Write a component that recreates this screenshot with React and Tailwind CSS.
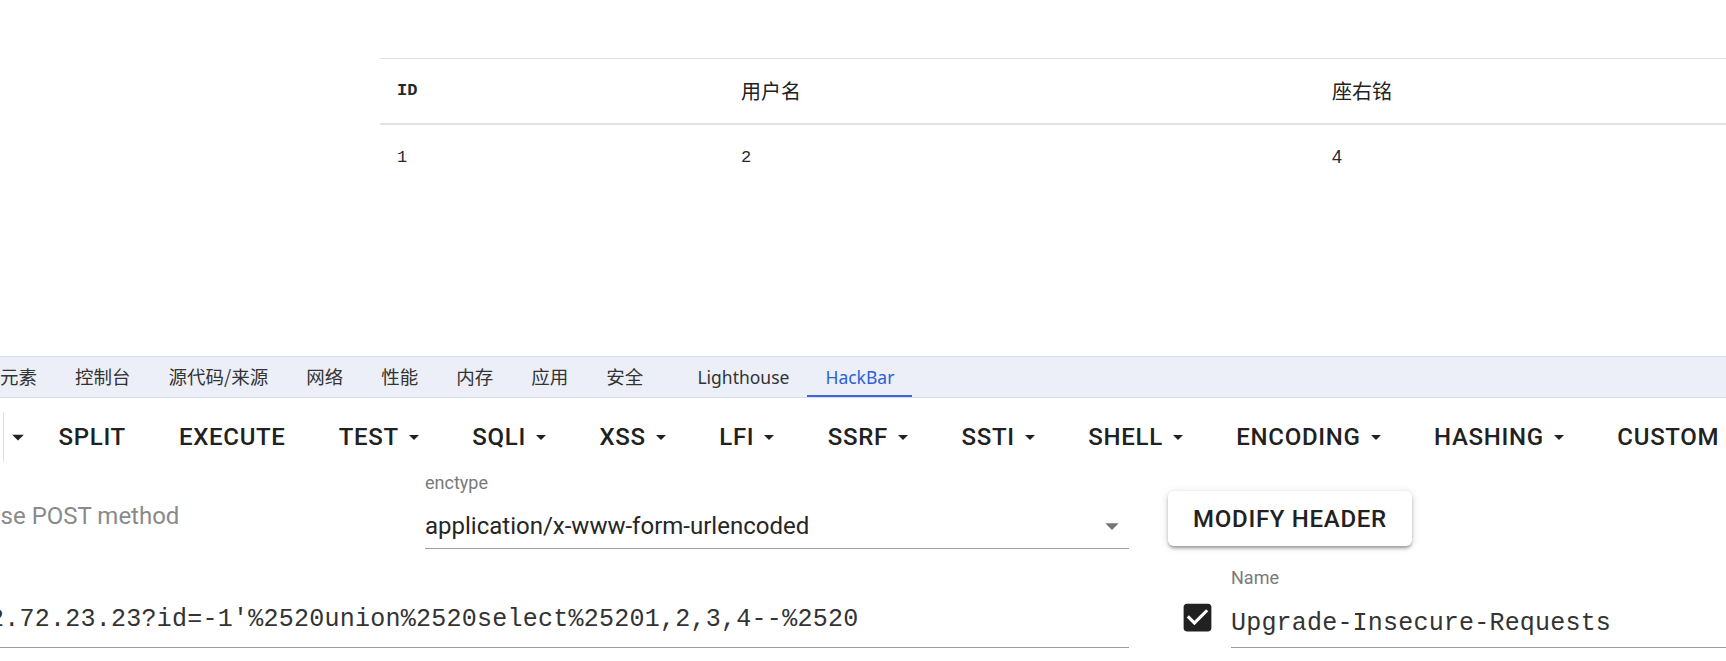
import React from 'react';

const Caret = ({ size = 24, color = '#212121', className = '' }) => (
  <svg width={size} height={size} viewBox="0 0 24 24" className={`shrink-0 ${className}`} fill={color}>
    <path d="M7 10l5 5 5-5z" />
  </svg>
);

const tabs = ['元素', '控制台', '源代码/来源', '网络', '性能', '内存', '应用', '安全'];

const tools = [
  { label: 'SPLIT' },
  { label: 'EXECUTE' },
  { label: 'TEST', menu: true },
  { label: 'SQLI', menu: true },
  { label: 'XSS', menu: true },
  { label: 'LFI', menu: true },
  { label: 'SSRF', menu: true },
  { label: 'SSTI', menu: true },
  { label: 'SHELL', menu: true },
  { label: 'ENCODING', menu: true },
  { label: 'HASHING', menu: true },
  { label: 'CUSTOM' },
];

const mono = { fontFamily: '"Liberation Mono", "DejaVu Sans Mono", monospace' };

const App = () => {
  return (
    <div
      className="w-[1726px] h-[661px] overflow-hidden bg-white text-[#212121]"
      style={{ fontFamily: 'Roboto, "Noto Sans", "Noto Sans CJK SC", sans-serif' }}
    >
      {/* page content */}
      <div className="h-[356px] pt-[58px] pl-[380px]">
        <table className="w-[1346px] table-fixed border-collapse text-left">
          <colgroup>
            <col className="w-[344px]" />
            <col className="w-[591px]" />
            <col />
          </colgroup>
          <thead>
            <tr className="h-[65px] border-t border-b-2 border-[#e2e2e2]">
              <th className="px-[17px] text-[17px] font-bold text-[#24292e]" style={mono}>ID</th>
              <th
                className="px-[17px] text-[20px] font-normal text-[#222]"
                style={{ fontFamily: '"Noto Sans CJK SC", sans-serif' }}
              >
                用户名
              </th>
              <th
                className="px-[17px] text-[20px] font-normal text-[#222]"
                style={{ fontFamily: '"Noto Sans CJK SC", sans-serif' }}
              >
                座右铭
              </th>
            </tr>
          </thead>
          <tbody>
            <tr className="h-[67px]">
              <td className="px-[17px] text-[17px] text-[#24292e]" style={mono}>1</td>
              <td className="px-[17px] text-[17px] text-[#24292e]" style={mono}>2</td>
              <td className="px-[17px] text-[18px] text-[#24292e]" style={{ fontFamily: '"Liberation Sans", sans-serif' }}>4</td>
            </tr>
          </tbody>
        </table>
      </div>

      {/* devtools tab strip */}
      <div
        className="h-[42px] flex items-center bg-[#eceff7] border-t border-b border-[#d5ddef] text-[18.5px] text-[#333]"
        style={{ fontFamily: '"Noto Sans CJK SC", "Noto Sans", sans-serif' }}
      >
        <div className="flex items-center ml-[-19px] h-full">
          {tabs.map((t) => (
            <div key={t} className="shrink-0 px-[19px] h-full flex items-center">{t}</div>
          ))}
          <div className="shrink-0 px-[18px] ml-[17px] h-full flex items-center text-[17.5px]" style={{ fontFamily: '"Noto Sans", sans-serif' }}>
            Lighthouse
          </div>
          <div
            className="shrink-0 px-[18px] h-full flex items-center text-[17.5px] text-[#2f5fd6] border-b-2 border-[#3a66d9] pt-[2px]"
            style={{ fontFamily: '"Noto Sans", sans-serif' }}
          >
            HackBar
          </div>
        </div>
      </div>

      {/* hackbar toolbar */}
      <div className="h-[70px] pt-[8px] flex items-center">
        <div className="shrink-0 ml-[3px] w-px h-[50px] bg-[#e0e0e0]" />
        <Caret size={28} />
        {tools.map((t) => (
          <div
            key={t.label}
            className="shrink-0 px-[26.5px] flex items-center text-[24px] font-medium tracking-[0.7px] whitespace-nowrap"
          >
            {t.label}
            {t.menu && <Caret size={24} className="ml-[3px] mr-[-6.5px]" />}
          </div>
        ))}
      </div>

      {/* form area */}
      <div className="flex">
        <div className="w-[1129px] shrink-0 flex flex-col">
          <div className="flex h-[81px]">
            <div className="w-[425px] shrink-0 overflow-hidden">
              <div className="mt-[32px] ml-[-15px] text-[24px] leading-[32px] text-[#8a8a8a] whitespace-nowrap">
                Use POST method
              </div>
            </div>
            <div className="flex-1 flex flex-col border-b border-[#9e9e9e]">
              <div className="mt-[4px] text-[18px] leading-[22px] text-[#7a7a7a]">enctype</div>
              <div className="mt-[16px] flex items-center justify-between">
                <span className="text-[24px] leading-[32px] text-[#262626]">application/x-www-form-urlencoded</span>
                <Caret size={32} color="#757575" className="mr-px" />
              </div>
            </div>
          </div>
          <div className="h-[99px] overflow-hidden border-b border-[#9e9e9e]">
            <div
              className="mt-[55px] ml-[-11px] text-[25px] leading-[32px] tracking-[0.25px] text-[#333] whitespace-nowrap"
              style={mono}
            >
              2.72.23.23?id=-1'%2520union%2520select%25201,2,3,4--%2520
            </div>
          </div>
        </div>

        <div className="ml-[39px] flex-1 flex flex-col">
          <button className="mt-[23px] w-[244px] h-[55px] rounded-[6px] bg-white text-[24px] font-medium tracking-[0.7px] text-[#212121] shadow-[0_3px_3px_-1px_rgba(0,0,0,0.25),0_2px_4px_0_rgba(0,0,0,0.14),0_1px_8px_0_rgba(0,0,0,0.12)]">
            MODIFY HEADER
          </button>
          <div className="flex mt-[21px]">
            <div className="w-[63px] shrink-0">
              <svg width="37" height="37" viewBox="0 0 24 24" className="mt-[32px] ml-[11px]" fill="#212121">
                <path d="M19 3H5c-1.11 0-2 .9-2 2v14c0 1.1.89 2 2 2h14c1.11 0 2-.9 2-2V5c0-1.1-.89-2-2-2zm-9 14l-5-5 1.41-1.41L10 14.17l7.59-7.59L19 8l-9 9z" />
              </svg>
            </div>
            <div className="flex-1 flex flex-col border-b border-[#9e9e9e] pb-[7px]">
              <div className="text-[18px] leading-[22px] text-[#7a7a7a]">Name</div>
              <div
                className="mt-[19px] text-[25px] leading-[32px] tracking-[0.2px] text-[#333] whitespace-nowrap"
                style={mono}
              >
                Upgrade-Insecure-Requests
              </div>
            </div>
          </div>
        </div>
      </div>
    </div>
  );
};

export default App;
